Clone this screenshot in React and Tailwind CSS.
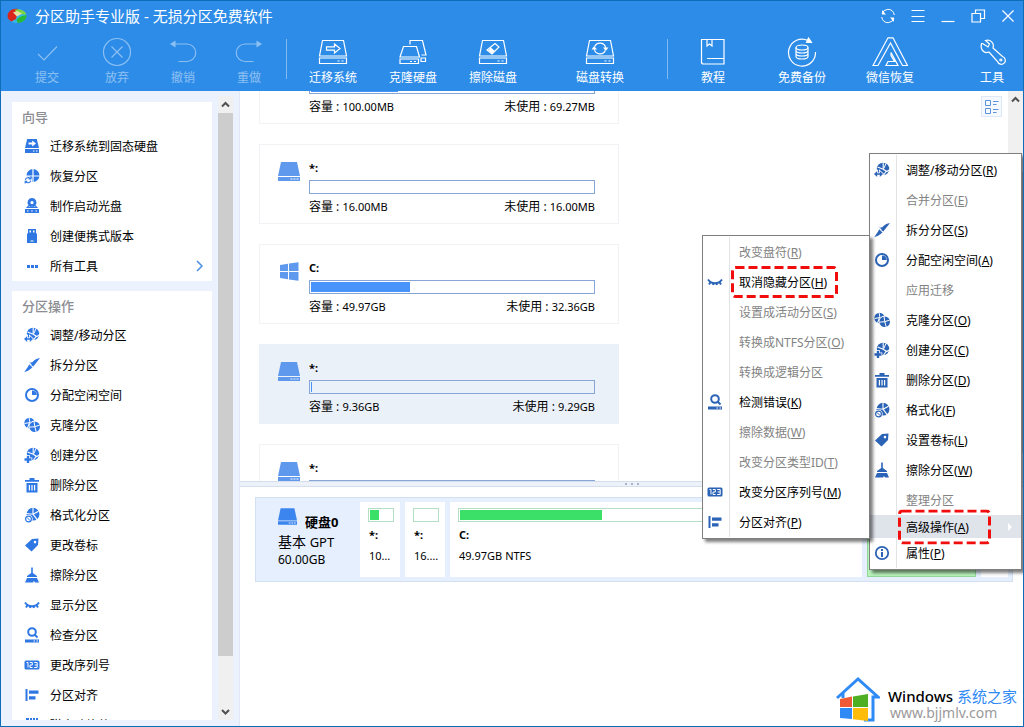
import clsx from "clsx";

/* ---------- small solid icons, 16 x 16 ---------- */

const pie = (
  <>
    <circle cx="9" cy="7" r="6.200" />
    <path d="M9.200.5v6.700L3.500 5M9.200 7.200l3.600 2.300L16 7.500M12.200 9.300L9 14" fill="none" stroke="#fff" strokeWidth="1.100" />
    <path d="M9.800 6.500L12 1.500" fill="none" stroke="#fff" strokeWidth="1" />
  </>
);

const glyphs = {
  migrate: (
    <>
      <path fillRule="evenodd" d="M3.200 1h9.600L15 10H1zM4.500 4.600v2h3.700v2L12 5.600 8.200 2.600v2z" />
      <path fillRule="evenodd" d="M1 11h14v4H1zM9 12.500v1h1.500v-1zM12 12.500v1h1.500v-1z" />
    </>
  ),
  recover: (
    <>
      <circle cx="9" cy="7.500" r="6.500" />
      <path d="M9 0v15M2 8h14" stroke="#fff" strokeWidth="1.200" />
      <circle cx="4" cy="12.200" r="4" fill="#fff" />
      <path d="M1.300 11.800a2.800 2.800 0 0 1 5-1M6.700 12.600a2.800 2.800 0 0 1-5 1M6.800 8.800v2.200H4.700M1.200 15.500v-2.200h2.100" fill="none" stroke="currentColor" strokeWidth="1.100" />
    </>
  ),
  disc: (
    <>
      <path fillRule="evenodd" d="M8 0a4.500 4.500 0 0 1 3.600 7.200L14 10H2l2.400-2.800A4.500 4.500 0 0 1 8 0zM8 3a1.600 1.600 0 1 0 0 3.200A1.600 1.600 0 0 0 8 3zM4.500 8.800h7L10.800 8a5 5 0 0 1-5.600 0z" />
      <path fillRule="evenodd" d="M1 11h14v4H1zM3 12.500v1h1.500v-1zM7.200 12.500v1h1.500v-1zM11.500 12.500v1H13v-1z" />
    </>
  ),
  usb: (
    <>
      <path fillRule="evenodd" d="M4 1h8v5H4zM5.500 2.500v2H7v-2zM9 2.500v2h1.500v-2z" />
      <path fillRule="evenodd" d="M3 5.500h10V15H3zM6.500 12.500v1h3v-1z" />
    </>
  ),
  dots: <path d="M3 7h3v3H3zM7 7h3v3H7zM11 7h3v3h-3z" />,
  resize: (
    <>
      {pie}
      <path d="M0 12l3.200-3v2.200h2.600V9L9 12l-3.200 3v-2.200H3.200V15z" stroke="#fff" strokeWidth="1.600" paintOrder="stroke" />
    </>
  ),
  split: (
    <>
      <path d="M16 1L9.500 9.300 6.500 6.500C9.500 5 10 2 16 1z" />
      <path d="M5.200 7.200l3.300 3.300C6 12.200 5.500 13.500.3 15.200 2 12 3.500 11 5.200 7.200z" />
      <path d="M4.500 4.500l2 1.300 1.800-.6-.8 3.500 2.500.8" />
    </>
  ),
  allocate: (
    <>
      <circle cx="8" cy="8" r="6" fill="none" stroke="currentColor" strokeWidth="2" />
      <path d="M8 3.500V8h4.800A5 5 0 0 0 8 3.500z" />
    </>
  ),
  clone: (
    <>
      <circle cx="5.500" cy="6" r="5.200" />
      <path d="M5 .5l1 5-5.500 1M5.500 5.500L3.500 11" fill="none" stroke="#fff" />
      <circle cx="10.700" cy="9.700" r="5.300" stroke="#fff" strokeWidth="1.600" paintOrder="stroke" />
      <path d="M10 4.200l.8 5.500-5.500.5M10.800 9.700l5-1.700M10.800 9.700l1.500 5.500" fill="none" stroke="#fff" />
    </>
  ),
  create: (
    <>
      {pie}
      <path d="M2.800 9h2.400v2.300h2.300v2.400H5.200V16H2.800v-2.300H.5v-2.400h2.300z" stroke="#fff" strokeWidth="1.600" paintOrder="stroke" />
    </>
  ),
  trash: (
    <>
      <path d="M5.500 1h5v2H15v1.800H1V3h4.500z" />
      <path fillRule="evenodd" d="M2.500 6h11v9.500h-11zM4.800 8v5.500h1.200V8zM7.400 8v5.500h1.200V8zM10 8v5.500h1.200V8z" />
    </>
  ),
  format: (
    <>
      <circle cx="9" cy="7.200" r="6.400" />
      <path d="M9 .5v6.700L2 6.500M9 7.200l5.500-3M9 7.200l4.500 6" fill="none" stroke="#fff" strokeWidth="1.100" />
      <circle cx="4.500" cy="12" r="4.200" fill="#fff" />
      <circle cx="4.500" cy="12" r="2.900" fill="none" stroke="currentColor" strokeWidth="1.200" />
      <path d="M2.800 10.300l3.400 3.400" stroke="currentColor" />
    </>
  ),
  tag: <path fillRule="evenodd" d="M1 8.500L8 2l6.500-.5L14 8l-6.500 6.500zM11 3.800a1.300 1.300 0 1 0 0 2.600 1.300 1.300 0 0 0 0-2.600z" />,
  broom: (
    <>
      <path d="M7.200.5h1.600V6l4.200 3v1H3V9l4.200-3z" />
      <path d="M3 11h10l2 4.500H11L10 14l-1 1.500H1z" />
    </>
  ),
  eye: (
    <path d="M1 5.500c3.500 5 10.500 5 14 0M3.600 8L2 10.500M6.500 9.300L6 11M9.500 9.300L10 11M12.400 8L14 10.500" fill="none" stroke="currentColor" strokeWidth="2" />
  ),
  check: (
    <>
      <circle cx="8" cy="5" r="3.800" fill="none" stroke="currentColor" strokeWidth="2" />
      <path d="M10.500 7.500l3 3" stroke="currentColor" strokeWidth="2" />
      <path fillRule="evenodd" d="M1 12.500h14v3H1zM9.500 13.500v1H11v-1zM12.500 13.500v1H14v-1z" />
    </>
  ),
  serial: (
    <>
      <rect x="0.500" y="3.500" width="15" height="9" rx="1.500" />
      <path d="M2.500 5.500H4v5M5.800 5.500h2.500V8H6v2.500h2.500M10.200 5.500h3V8h-2.500M13.200 8v2.500h-3" fill="none" stroke="#fff" />
    </>
  ),
  align: <path d="M1.500 2h2v12h-2zM5 3.500h9.500v3.300H5zM5 9.200h6.500v3.300H5z" />,
  defrag: <path d="M2 1h3v3H2zM6 1h2v3H6zM9 1h2v3H9zM12 1h2v3h-2zM2 6h12v2H2zM2 10h12v2H2z" />,
  info: (
    <>
      <circle cx="8" cy="8" r="6.200" fill="none" stroke="currentColor" strokeWidth="1.800" />
      <path d="M7 4h2v2H7zM7 7h2v5H7z" />
    </>
  ),
};

function Glyph({ name }) {
  return (
    <svg viewBox="0 0 16 16" className="size-4 shrink-0" fill="currentColor" aria-hidden="true">
      {glyphs[name]}
    </svg>
  );
}

/* ---------- toolbar line icons, 36 x 30 ---------- */

const driveBase = <path d="M7.500 3.500h21l3 15.500h-27zM4.500 21h27v5.500h-27zM22.500 24h2M26.500 24h2" />;

const toolIcons = {
  submit: <path d="M9 17l6 6L28 9.500" />,
  discard: (
    <>
      <circle cx="18" cy="15" r="13.500" />
      <path d="M12.500 9.500l11 11M23.500 9.500l-11 11" />
    </>
  ),
  undo: (
    <>
      <path d="M8 7h14a8.700 8.700 0 0 1 0 17.500h-8.500" />
      <path d="M10.500 3.500v7L5 7z" fill="currentColor" stroke="none" />
    </>
  ),
  redo: (
    <>
      <path d="M28 7H14a8.700 8.700 0 0 0 0 17.500h8.500" />
      <path d="M25.500 3.500v7L31 7z" fill="currentColor" stroke="none" />
    </>
  ),
  migrate: (
    <>
      {driveBase}
      <path d="M11.500 9.800h8V7l5.500 4.500-5.500 4.500v-2.800h-8z" />
    </>
  ),
  clone: (
    <>
      <path d="M15 7.500v-4h12.500l3.500 14.500h-4.500M26 21h4.500v3.500H26z" />
      <path d="M8.500 9.500h13l3 10.500H5zM5 22h18.500v4.500H5zM15 24.500h2M19 24.500h2" />
    </>
  ),
  wipe: (
    <>
      {driveBase}
      <path d="M20 6.500l4 3.500-7 7-5-4zM15.500 11l4 3.500" />
      <path d="M15.500 11l3.800 3.300L17 16.500l-4-3.300z" fill="currentColor" stroke="none" />
    </>
  ),
  convert: (
    <>
      {driveBase}
      <path d="M12.700 9.500a5.800 5.800 0 0 1 11 1.500M23.300 13.500a5.800 5.800 0 0 1-11-1.500" />
      <path d="M21 10.500h5.500L23.800 14zM15 12.500H9.500L12.200 9z" fill="currentColor" stroke="none" />
    </>
  ),
  book: (
    <>
      <path d="M29 21V2.500H6.500V25a2 2 0 0 0 2 2H29v-5.500H12" />
      <path d="M12 3v6l2.500-2 2.500 2V3" />
    </>
  ),
  backup: (
    <>
      <path d="M24 3.500A13.500 13.500 0 1 0 31.500 15" />
      <path d="M22.500 5.500l2-4.500 3 4.500z" fill="currentColor" />
      <ellipse cx="18" cy="10.500" rx="6" ry="2.500" />
      <path d="M12 10.500v9c0 3.300 12 3.300 12 0v-9M12 13.500c0 3.300 12 3.300 12 0M12 16.500c0 3.300 12 3.300 12 0" />
    </>
  ),
  wechat: (
    <>
      <path d="M1 28.500L16 .8h5L35.500 28.500h-5L18.500 6 6 28.500z" />
      <path d="M14 28.500h12L19 15.500v3l3.500 6H16z" />
    </>
  ),
  wrench: (
    <path d="M8.500 6.500l5.500 3.500 1.500-3-4-3.500c5-1.500 9 2.500 7.500 7.500l9.500 8.500a4 4 0 1 1-5 5L15 15c-5 2-9-2.500-7.500-8.500zM26.800 22a1 1 0 1 0 .1 0z" />
  ),
};

function ToolButton({ icon, label, className, disabled }) {
  return (
    <button
      type="button"
      disabled={disabled}
      className={clsx("flex shrink-0 flex-col items-center pt-1.5 text-xs leading-[22px]", disabled && "opacity-45", className)}
    >
      <svg viewBox="0 0 36 30" className="h-[30px] w-9" fill="none" stroke="currentColor" strokeWidth="1.200" aria-hidden="true">
        {toolIcons[icon]}
      </svg>
      {label}
    </button>
  );
}

function WindowButton({ label, children }) {
  return (
    <button type="button" aria-label={label} className="flex h-[30px] w-[30px] items-center justify-center">
      <svg viewBox="0 0 16 16" className="size-4" fill="none" stroke="currentColor" aria-hidden="true">
        {children}
      </svg>
    </button>
  );
}

function Header() {
  return (
    <header className="shrink-0 bg-[#2d8ce8] text-white">
      <div className="flex h-[30px] items-center">
        <svg viewBox="0 0 20 16" className="ml-1.5 h-4 w-5" aria-hidden="true">
          <ellipse cx="10" cy="8" rx="9.500" ry="7" fill="#35b8e8" />
          <path d="M11 1C5 0 .5 4 .5 8c0 2.500 1.500 4.500 4 5.500L9 11l1-4z" fill="#d9261c" />
          <path d="M8 1.500L9.500 6l9.800.5C18.500 3 14 1 8 1.500z" fill="#7fd63c" />
          <path d="M19.500 7c.5 4-3.500 8-9 8l-1-3.500 4-3z" fill="#27b93a" />
          <path d="M6 4.500l4-1.500 5 2.500-5 3z" fill="#e8e0a0" />
        </svg>
        <h1 className="ml-2 text-[15px] leading-5">分区助手专业版 - 无损分区免费软件</h1>
        <div className="ml-auto flex">
          <WindowButton label="刷新">
            <path d="M2 6a6.300 6.300 0 0 1 11.500-1.500L14.300 7M14 10a6.300 6.300 0 0 1-11.500 1.500L1.700 9" />
            <path d="M2 2v4.500h4zM14 14V9.500h-4z" fill="currentColor" stroke="none" />
          </WindowButton>
          <WindowButton label="菜单">
            <path d="M1.500 2.500h13M1.500 8.500h13M1.500 13.500h13" strokeWidth="1.200" />
          </WindowButton>
          <WindowButton label="最小化">
            <path d="M1.500 13.500h13" strokeWidth="1.200" />
          </WindowButton>
          <WindowButton label="还原">
            <path d="M2 5.500h8.500V14H2zM5.500 5.500V2h9v8.500h-4" strokeWidth="1.200" />
          </WindowButton>
          <WindowButton label="关闭">
            <path d="M2.500 2.500l11 11M13.500 2.500l-11 11" strokeWidth="1.200" />
          </WindowButton>
        </div>
      </div>

      <div className="flex h-[60px]">
        <div className="flex pl-[13px]">
          <ToolButton icon="submit" label="提交" className="mr-1 w-[66px]" disabled />
          <ToolButton icon="discard" label="放弃" className="w-[66px]" disabled />
          <ToolButton icon="undo" label="撤销" className="w-[66px]" disabled />
          <ToolButton icon="redo" label="重做" className="w-[66px]" disabled />
        </div>
        <div className="mt-2 mr-1.5 ml-1 h-10 w-px bg-white/40" />
        <ToolButton icon="migrate" label="迁移系统" className="w-20" />
        <ToolButton icon="clone" label="克隆硬盘" className="w-20" />
        <ToolButton icon="wipe" label="擦除磁盘" className="w-20" />
        <ToolButton icon="convert" label="磁盘转换" className="ml-[27px] w-20" />
        <div className="mt-2 ml-[27px] h-10 w-px bg-white/40" />
        <ToolButton icon="book" label="教程" className="w-[90px]" />
        <ToolButton icon="backup" label="免费备份" className="w-[88px]" />
        <ToolButton icon="wechat" label="微信恢复" className="w-[88px]" />
        <ToolButton icon="wrench" label="工具" className="ml-auto w-[62px]" />
      </div>
    </header>
  );
}

/* ---------- sidebar ---------- */

const wizardItems = [
  { icon: "migrate", label: "迁移系统到固态硬盘" },
  { icon: "recover", label: "恢复分区" },
  { icon: "disc", label: "制作启动光盘" },
  { icon: "usb", label: "创建便携式版本" },
  { icon: "dots", label: "所有工具", more: true },
];

const partitionItems = [
  { icon: "resize", label: "调整/移动分区" },
  { icon: "split", label: "拆分分区" },
  { icon: "allocate", label: "分配空闲空间" },
  { icon: "clone", label: "克隆分区" },
  { icon: "create", label: "创建分区" },
  { icon: "trash", label: "删除分区" },
  { icon: "format", label: "格式化分区" },
  { icon: "tag", label: "更改卷标" },
  { icon: "broom", label: "擦除分区" },
  { icon: "eye", label: "显示分区" },
  { icon: "check", label: "检查分区" },
  { icon: "serial", label: "更改序列号" },
  { icon: "align", label: "分区对齐" },
  { icon: "defrag", label: "磁盘碎片整理" },
];

function SidePanel({ title, items }) {
  return (
    <section className="shrink-0 bg-white">
      <h2 className="h-[29px] pl-2.5 text-[13px] leading-[30px] font-medium text-[#8b8d92]">{title}</h2>
      <ul>
        {items.map((item) => (
          <li key={item.label}>
            <button type="button" className="flex h-[30px] w-full items-center gap-2.5 px-3 text-left">
              <span className="text-[#2f78e4]">
                <Glyph name={item.icon} />
              </span>
              <span className="pt-0.5">{item.label}</span>
              {item.more && (
                <svg viewBox="0 0 8 12" className="-mr-2 ml-auto h-3 w-4 text-[#4a90e2]" fill="none" stroke="currentColor" strokeWidth="1.500" aria-hidden="true">
                  <path d="M1 1l5 5-5 5" />
                </svg>
              )}
            </button>
          </li>
        ))}
      </ul>
    </section>
  );
}

function ScrollArrow({ down }) {
  return (
    <svg viewBox="0 0 15 17" className="h-[17px] w-full shrink-0" fill="none" stroke="#505050" strokeWidth="2" aria-hidden="true">
      <path d={down ? "M4 7l3.500 3.500L11 7" : "M4 10.500L7.500 7l3.500 3.500"} />
    </svg>
  );
}

function Sidebar() {
  return (
    <aside className="flex w-[239px] shrink-0 border-r border-[#e0e8f4] bg-[#ebf2fd] pr-1.5 pl-[11px]">
      <div className="mb-1.5 flex min-h-0 flex-1 flex-col gap-2.5 overflow-hidden pt-[11px]">
        <SidePanel title="向导" items={wizardItems} />
        <SidePanel title="分区操作" items={partitionItems} />
      </div>
      <div className="mt-[5px] mb-1.5 ml-1.5 flex w-[15px] flex-col bg-[#f0f0f0]">
        <ScrollArrow />
        <div className="min-h-0 flex-1">
          <div className="h-[92%] bg-[#cdcdcd]" />
        </div>
        <ScrollArrow down />
      </div>
    </aside>
  );
}

/* ---------- partition list and disk map ---------- */

const partitions = [
  { name: "*:", size: "100.00MB", free: "69.27MB", used: 31 },
  { name: "*:", size: "16.00MB", free: "16.00MB", used: 0 },
  { name: "C:", size: "49.97GB", free: "32.36GB", used: 35, system: true },
  { name: "*:", size: "9.36GB", free: "9.29GB", used: 0.5, selected: true },
  { name: "*:", size: "548.00MB", free: "88.14MB", used: 84 },
];

function DriveIcon({ className }) {
  return (
    <svg viewBox="0 0 22 19" className={className} fill="currentColor" aria-hidden="true">
      <path d="M3 0h16l3 14H0z" />
      <path fillRule="evenodd" d="M0 15h22v4H0zM12.500 16.500v1h2v-1zM15.500 16.500v1h2v-1zM18.500 16.500v1h2v-1z" />
    </svg>
  );
}

function WindowsIcon() {
  return (
    <svg viewBox="0 0 22 19" className="h-[19px] w-[22px]" fill="currentColor" aria-hidden="true">
      <path d="M2 3l8-1.200V9H2zM11 1.600L20.500.3V9H11zM2 10h8v7.200L2 16zM11 10h9.500v8.700L11 17.400z" />
    </svg>
  );
}

function PartitionCard({ part }) {
  return (
    <li
      className={clsx(
        "flex h-20 w-[360px] shrink-0 gap-[9px] border pr-[23px] pl-[18px]",
        part.selected ? "border-[#ebf1f9] bg-[#ebf1f9]" : "border-[#f0f2f5] bg-white",
      )}
    >
      <div className="pt-[17px] text-[#5f99ee]">
        {part.system ? <WindowsIcon /> : <DriveIcon className="h-[19px] w-[22px]" />}
      </div>
      <div className="min-w-0 flex-1 pt-3.5">
        <p className="mb-[3px] text-[11px] leading-[18px] font-bold">{part.name}</p>
        <div className="h-3.5 border border-[#87a5d6] p-px">
          <div className="h-full bg-[#4894fb]" style={{ width: `${part.used}%` }} />
        </div>
        <p className="mt-[3px] flex justify-between leading-5">
          <span>
            容量 : <span className="text-[11px]">{part.size}</span>
          </span>
          <span>
            未使用 : <span className="text-[11px]">{part.free}</span>
          </span>
        </p>
      </div>
    </li>
  );
}

function DiskCell({ name, info, used, className }) {
  return (
    <li className={clsx("bg-white pt-1.5 pr-1.5 pl-2", className)}>
      <div className="h-3.5 border border-[#b5dfc4] p-px">
        <div className="h-full bg-[#3be068]" style={{ width: `${used}%` }} />
      </div>
      <p className="mt-[3px] pl-px text-[11px] leading-5 font-bold">{name}</p>
      <p className="truncate pl-px text-[11px] leading-[22px]">{info}</p>
    </li>
  );
}

function Main() {
  return (
    <main className="flex min-w-0 flex-1 flex-col">
      <div className="flex h-[390px] shrink-0">
        <div className="min-w-0 flex-1 overflow-hidden pl-[19px]">
          <ul className="-mt-[47px] flex flex-col gap-5">
            {partitions.map((part, i) => (
              <PartitionCard key={i} part={part} />
            ))}
          </ul>
        </div>
        <button type="button" aria-label="视图" className="mt-[5px] mr-1.5 flex size-[21px] items-center justify-center border border-[#dfe8f6] bg-[#f5f8fd]">
          <svg viewBox="0 0 14 14" className="size-3.5" fill="none" stroke="#5b93dc" aria-hidden="true">
            <path d="M.5.5h5v5h-5zM.5 8.500h5v5h-5zM8 1.500h5.500M8 4.500h3.500M8 9.500h5.500M8 12.500h3.500" />
          </svg>
        </button>
        <div className="w-[15px] bg-[#f0f0f0]">
          <ScrollArrow />
          <div className="mt-16 h-[72%] bg-[#cdcdcd]" />
        </div>
      </div>

      <div className="flex h-1.5 shrink-0 items-center justify-center gap-1 border-y border-[#d5deeb] bg-[#edf2fa]">
        <span className="size-0.5 bg-[#a9b3c2]" />
        <span className="size-0.5 bg-[#a9b3c2]" />
        <span className="size-0.5 bg-[#a9b3c2]" />
      </div>

      <div className="mt-2.5 mr-2.5 ml-[15px] flex border border-[#d3e0f2] bg-[#e5effd]">
        <div className="w-[104px] shrink-0 pt-2.5 pl-[22px]">
          <p className="flex h-5 items-start gap-2 text-[13px] leading-5 font-bold">
            <DriveIcon className="h-[17px] w-[19px] text-[#3d85ee]" />
            <span className="pt-1">硬盘0</span>
          </p>
          <p className="pt-1 text-sm leading-5">
            基本 <span className="text-[13px]">GPT</span>
          </p>
          <p className="text-xs leading-4">60.00GB</p>
        </div>
        <ul className="flex min-w-0 flex-1 gap-[5px] py-1 pr-1">
          <DiskCell name="*:" info="100.00MB NTFS" used={40} className="h-[75px] w-10" />
          <DiskCell name="*:" info="16.00MB" used={0} className="w-10" />
          <DiskCell name="C:" info="49.97GB NTFS" used={36} className="flex-1" />
          <li className="w-[109px] border border-[#93d79a] bg-[#b8f3bb]" />
          <li className="w-[27px] bg-white" />
        </ul>
      </div>
    </main>
  );
}

/* ---------- context menus ---------- */

const contextItems = [
  { icon: "resize", label: "调整/移动分区", hotkey: "R" },
  { label: "合并分区", hotkey: "E", disabled: true },
  { icon: "split", label: "拆分分区", hotkey: "S" },
  { icon: "allocate", label: "分配空闲空间", hotkey: "A" },
  { label: "应用迁移", disabled: true },
  { icon: "clone", label: "克隆分区", hotkey: "O" },
  { icon: "create", label: "创建分区", hotkey: "C" },
  { icon: "trash", label: "删除分区", hotkey: "D" },
  { icon: "format", label: "格式化", hotkey: "F" },
  { icon: "tag", label: "设置卷标", hotkey: "L" },
  { icon: "broom", label: "擦除分区", hotkey: "W" },
  { label: "整理分区", disabled: true },
  { label: "高级操作", hotkey: "A", active: true, marked: "h-[35px] w-[93px]" },
  { icon: "info", label: "属性", hotkey: "P" },
];

const advancedItems = [
  { label: "改变盘符", hotkey: "R", disabled: true },
  { icon: "eye", label: "取消隐藏分区", hotkey: "H", marked: "h-8 w-[107px]" },
  { label: "设置成活动分区", hotkey: "S", disabled: true },
  { label: "转换成NTFS分区", hotkey: "O", disabled: true },
  { label: "转换成逻辑分区", disabled: true },
  { icon: "check", label: "检测错误", hotkey: "K" },
  { label: "擦除数据", hotkey: "W", disabled: true },
  { label: "改变分区类型ID", hotkey: "T", disabled: true },
  { icon: "serial", label: "改变分区序列号", hotkey: "M" },
  { icon: "align", label: "分区对齐", hotkey: "P" },
];

function MenuItem({ item }) {
  return (
    <li>
      <button
        type="button"
        disabled={item.disabled}
        className={clsx(
          "flex w-full items-center text-left whitespace-nowrap",
          item.active ? "h-[23px] bg-[#dfe3ea]" : "h-[30px]",
          item.disabled ? "text-[#838383]" : "text-black",
        )}
      >
        <span className="flex w-[27px] shrink-0 justify-center self-stretch border-r border-[#e2e3e3] pr-0.5 text-[#2b63b6]">
          <span className="self-center">{item.icon && <Glyph name={item.icon} />}</span>
        </span>
        <span className="relative ml-[9px] pt-0.5">
          {item.label}
          {item.hotkey && (
            <>
              (<u>{item.hotkey}</u>)
            </>
          )}
          {item.marked && (
            <svg className={clsx("absolute top-1/2 -left-2 -translate-y-1/2", item.marked)} aria-hidden="true">
              <rect x="1.500" y="1.500" rx="3" fill="none" stroke="#f20d0d" strokeWidth="3" strokeDasharray="9 4" className="h-[calc(100%-3px)] w-[calc(100%-3px)]" />
            </svg>
          )}
        </span>
        {item.active && (
          <svg viewBox="0 0 4 8" className="mr-[9px] ml-auto h-2 w-1" fill="#fff" aria-hidden="true">
            <path d="M0 0l4 4-4 4z" />
          </svg>
        )}
      </button>
    </li>
  );
}

function Menu({ label, items, className }) {
  return (
    <ul aria-label={label} className={clsx("absolute border border-[#7f7f7f] bg-white py-px shadow-[3px_3px_3px_rgba(0,0,0,0.5)]", className)}>
      {items.map((item) => (
        <MenuItem key={item.label} item={item} />
      ))}
    </ul>
  );
}

function Watermark() {
  return (
    <a href="#site" className="absolute -right-px bottom-0 flex h-[55px] w-[202px] items-center bg-white pl-3.5">
      <svg viewBox="0 0 44 46" className="h-[46px] w-11 shrink-0" aria-hidden="true">
        <path d="M1 22L22 3l20 18h-5v23H28" fill="none" stroke="#2f8af5" strokeWidth="3" />
        <path d="M7 17v5" stroke="#2f8af5" strokeWidth="3" />
        <path d="M4 23l12-2.500V31H4z" fill="#ee5a35" />
        <path d="M17 20.500L32 18v13H17z" fill="#4faf23" />
        <path d="M4 32h12v11L4 42z" fill="#2f8af5" />
        <path d="M17 32h15v13l-15-1.800z" fill="#fdbb0a" />
      </svg>
      <span className="ml-2 block pt-2.5 whitespace-nowrap">
        <span className="block text-[15px] leading-[18px] font-medium text-black">
          Windows <span className="font-normal text-[#2f8af5]">系统之家</span>
        </span>
        <span className="block pl-0.5 text-sm leading-4 text-[#9a9a9a]">www.bjjmlv.com</span>
      </span>
    </a>
  );
}

export default function App() {
  return (
    <div className="relative flex h-screen flex-col overflow-hidden border border-[#0f6cb9] bg-white font-['Noto_Sans','Noto_Sans_CJK_SC',sans-serif] text-xs text-black">
      <Header />
      <div className="flex min-h-0 flex-1">
        <Sidebar />
        <Main />
      </div>
      <Menu label="分区菜单" items={contextItems} className="top-[152px] right-px w-[153px]" />
      <Menu label="高级操作" items={advancedItems} className="top-[234px] right-[153px] w-[168px]" />
      <Watermark />
    </div>
  );
}
